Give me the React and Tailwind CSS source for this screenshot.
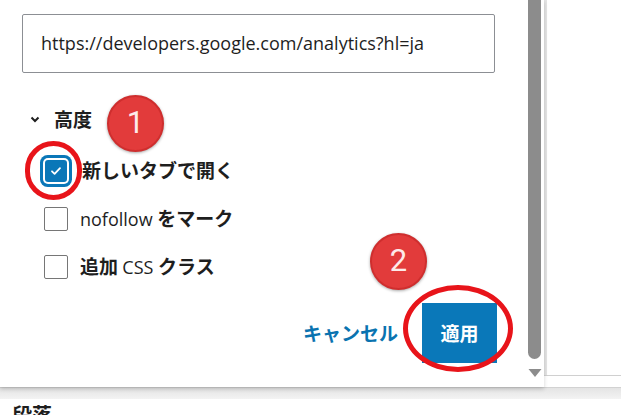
import React from 'react';

const jp = { fontFamily: '"Noto Sans CJK JP", "Noto Sans", sans-serif' };
const latin = { fontFamily: '"Open Sans", "Noto Sans", sans-serif' };

const Badge = ({ n, className }) => (
  <div
    className={`absolute z-30 w-[57px] h-[57px] rounded-full bg-[#e23b3b] border-2 border-[#cf2e2e] shadow-[0_1px_3px_rgba(0,0,0,0.35)] flex items-center justify-center text-[#fdeaea] text-[31px] ${className}`}
    style={{ fontFamily: 'Roboto, sans-serif' }}
  >
    {n}
  </div>
);

const Check = ({ checked }) => (
  <span className="w-[24px] h-[24px] flex items-center justify-center">
    {checked ? (
      <span className="w-[22px] h-[22px] shrink-0 rounded-[3px] bg-[#0a77b8] flex items-center justify-center shadow-[0_0_0_2px_#fff,0_0_0_5px_#0a77b8]">
        <svg width="14" height="14" viewBox="0 0 14 14" fill="none">
          <path d="M3 7.3l2.6 2.5L11 4.2" stroke="#fff" strokeWidth="1.8" strokeLinecap="round" strokeLinejoin="round" />
        </svg>
      </span>
    ) : (
      <span className="w-[24px] h-[24px] rounded-[2px] border border-[#767676] bg-white" />
    )}
  </span>
);

export default function App() {
  return (
    <div className="relative w-[621px] h-[415px] overflow-hidden bg-white" style={jp}>
      <div className="flex h-[387px]">
        {/* link popover */}
        <div className="relative w-[544px] h-[387px] bg-white flex shadow-[0_2px_4px_rgba(0,0,0,0.18)] z-10">
          <div className="flex-1 pl-[22px] pr-[32px] pt-[14px]">
            <div className="h-[59px] border border-[#8c8f94] rounded-[2px] flex items-center pl-[18px] text-[18px] text-[#1e1e1e]" style={latin}>
              https://developers.google.com/analytics?hl=ja
            </div>

            <div className="flex items-center mt-[33px] ml-[8px] gap-[14px] h-[26px]">
              <svg width="10" height="8" viewBox="0 0 10 8">
                <path d="M1.5 2.5L5 6l3.5-3.5" stroke="#1e1e1e" strokeWidth="2" fill="none" />
              </svg>
              <span className="text-[19px] font-bold text-[#1e1e1e]">高度</span>
            </div>

            <div className="mt-[25px] ml-[22px] flex flex-col gap-[21px] text-[19px] text-[#1e1e1e]">
              <label className="flex items-center gap-[14px] h-[27px]">
                <Check checked />
                <span className="font-bold">新しいタブで開く</span>
              </label>
              <label className="flex items-center gap-[12px] h-[27px]">
                <Check />
                <span>
                  <span className="text-[18px]" style={latin}>nofollow </span>
                  <span className="font-bold">をマーク</span>
                </span>
              </label>
              <label className="flex items-center gap-[12px] h-[27px]">
                <Check />
                <span>
                  <span className="font-bold">追加 </span>
                  <span className="text-[18px]" style={latin}>CSS </span>
                  <span className="font-bold">クラス</span>
                </span>
              </label>
            </div>

            <div className="flex items-center justify-end mt-[23px] -mr-[2px] gap-[24px]">
              <span className="text-[19px] font-bold text-[#0a73b0]">キャンセル</span>
              <button className="w-[75px] h-[60px] bg-[#0a78b9] text-white text-[19px] font-bold">適用</button>
            </div>
          </div>

          {/* scrollbar */}
          <div className="w-[17px] pl-[1px] pr-[3px] flex flex-col items-center">
            <div className="w-[13px] h-[359px] bg-[#8c8c8c] rounded-b-[7px]" />
            <svg className="mt-[9px]" width="14" height="10" viewBox="0 0 14 10">
              <path d="M0.5 1h13L7 9z" fill="#8c8c8c" />
            </svg>
          </div>
        </div>

        {/* right side */}
        <div className="flex-1 flex flex-col">
          <div className="h-[375px] border-l-[3px] border-[#e4e4e4]" />
          <div className="h-[1px] bg-[#d0d0d0]" />
        </div>
      </div>

      {/* bottom bar */}
      <div className="h-[12px] bg-gradient-to-b from-[#e4e4e4] to-[#f3f3f3] border-t border-[#d2d2d2]" />
      <div className="pl-[12px] pt-[6px] text-[20px] font-bold text-[#1e1e1e] leading-none">段落</div>

      {/* annotations */}
      <Badge n="1" className="left-[107px] top-[95px]" />
      <Badge n="2" className="left-[370px] top-[233px]" />
      <div className="absolute left-[25px] top-[141px] w-[57px] h-[59px] rounded-full border-[5px] border-[#e8141a] z-20" />
      <div className="absolute left-[403px] top-[285px] w-[110px] h-[87px] rounded-[50%] border-[5px] border-[#e8141a] z-20" />
    </div>
  );
}
